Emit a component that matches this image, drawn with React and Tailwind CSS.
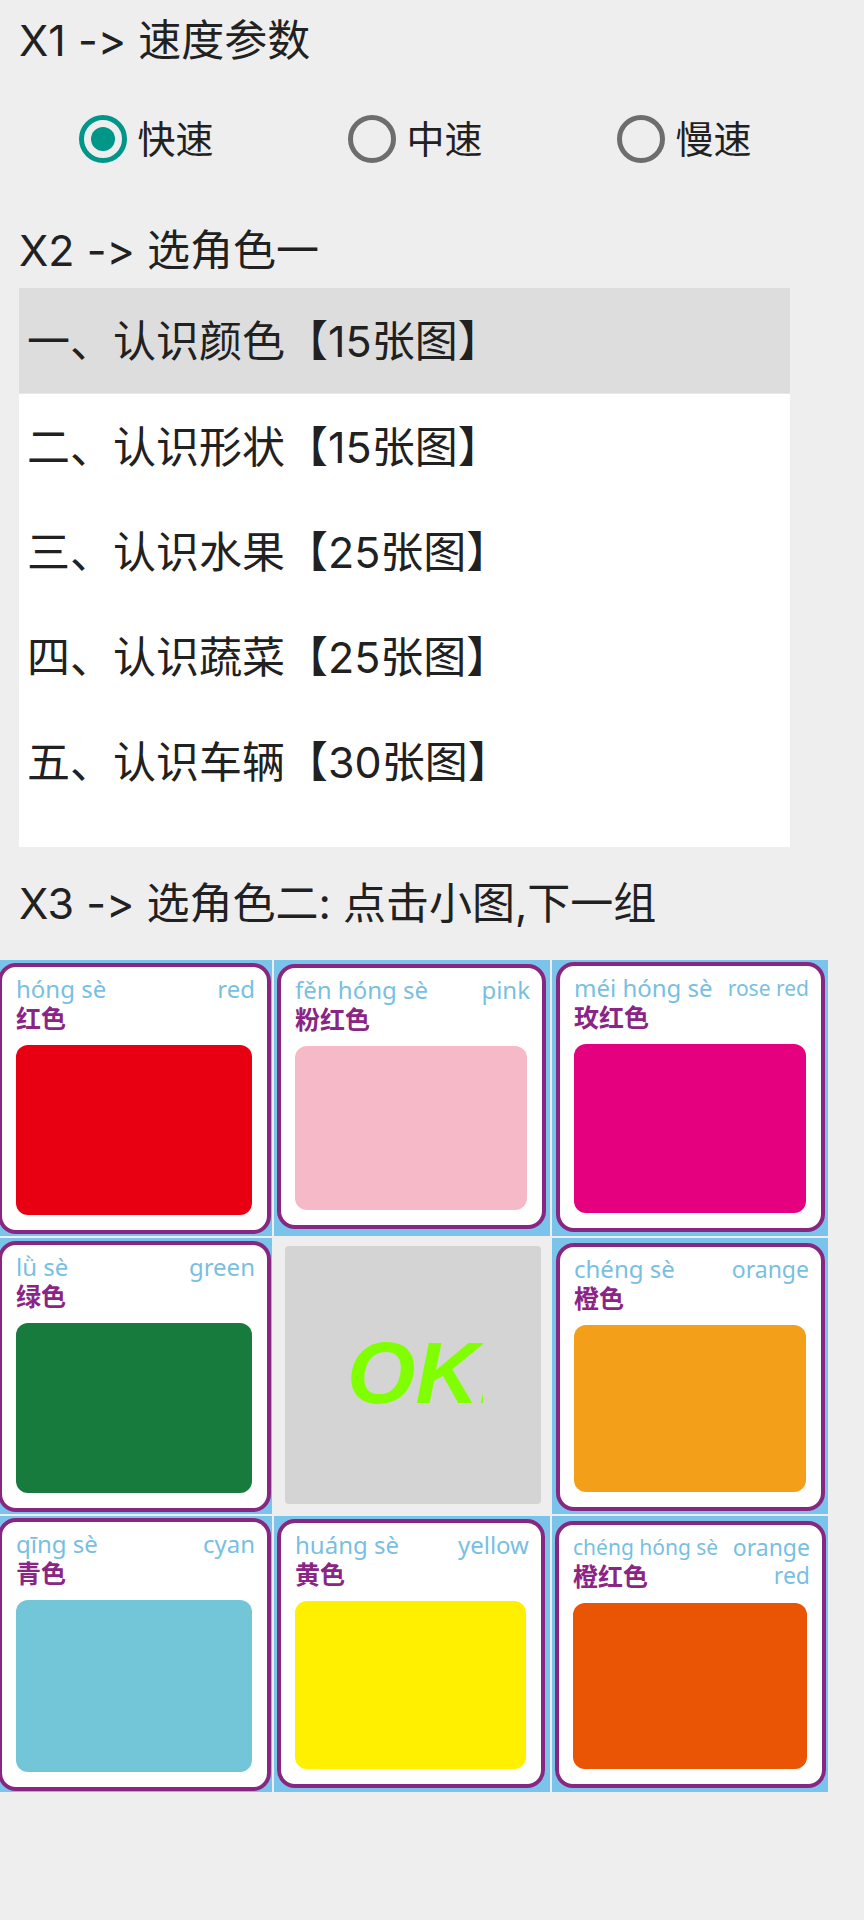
import { useState } from 'react';

const speeds = ['快速', '中速', '慢速'];

const topics = [
  '一、认识颜色【15张图】',
  '二、认识形状【15张图】',
  '三、认识水果【25张图】',
  '四、认识蔬菜【25张图】',
  '五、认识车辆【30张图】',
];

const cards = [
  { pinyin: 'hóng sè', hanzi: '红色', english: 'red', fill: 'bg-[#e80012]', pad: 'pl-[2px] pt-[3px] pr-px pb-[2px]' },
  { pinyin: 'fěn hóng sè', hanzi: '粉红色', english: 'pink', fill: 'bg-[#f6b9c8]', pad: 'pl-[3px] pt-[4px] pr-[4px] pb-[7px]' },
  { pinyin: 'méi hóng sè', hanzi: '玫红色', english: 'rose red', englishSize: 'text-[21px]', fill: 'bg-[#e5007f]', pad: 'pl-[4px] pt-[2px] pr-[3px] pb-[4px]' },
  { pinyin: 'lǜ sè', hanzi: '绿色', english: 'green', fill: 'bg-[#177b3d]', pad: 'pl-[2px] pt-[3px] pr-px pb-[2px]' },
  null,
  { pinyin: 'chéng sè', hanzi: '橙色', english: 'orange', englishSize: 'text-[23px]', fill: 'bg-[#f39f19]', pad: 'pl-[4px] pt-[5px] pr-[3px] pb-[3px]' },
  { pinyin: 'qīng sè', hanzi: '青色', english: 'cyan', fill: 'bg-[#73c6d8]', pad: 'pl-[2px] pt-[2px] pr-px pb-px' },
  { pinyin: 'huáng sè', hanzi: '黄色', english: 'yellow', fill: 'bg-[#fff000]', pad: 'pl-[3px] pt-[3px] pr-[5px] pb-[4px]' },
  { pinyin: 'chéng hóng sè', pinyinSize: 'text-[21px]', hanzi: '橙红色', english: 'orange\nred', englishSize: 'text-[23px]', fill: 'bg-[#ea5405]', pad: 'pl-[3px] pt-[5px] pr-[2px] pb-[4px]' },
];

function Heading({ id, className = '', children }) {
  return (
    <h2 id={id} className={`pl-[19px] text-[43px] leading-[60px] whitespace-nowrap ${className}`}>
      {children}
    </h2>
  );
}

function SpeedOption({ label, checked, onSelect }) {
  return (
    <label className="flex h-12 items-center gap-[10px] text-[38px] leading-[48px] whitespace-nowrap">
      <input
        type="radio"
        name="speed"
        checked={checked}
        onChange={onSelect}
        className="grid size-12 shrink-0 appearance-none place-items-center rounded-full border-[5px] border-[#6d6d6d] before:size-6 before:rounded-full checked:border-[#009688] checked:before:bg-[#009688]"
      />
      {label}
    </label>
  );
}

function ColorCard({ card }) {
  return (
    <button type="button" className={`flex aspect-square bg-[#7ac3ea] ${card.pad}`}>
      <span className="flex h-full w-full flex-col rounded-[18px] border-4 border-[#882782] bg-white pr-[12px] pb-[15px] pl-[14px] text-left">
        <span className="flex h-[78px] shrink-0 justify-between pt-2 font-['Noto_Sans','Noto_Sans_CJK_SC',sans-serif] whitespace-nowrap text-[#78bfe2]">
          <span className="flex flex-col">
            <span className={`leading-[28px] ${card.pinyinSize || 'text-[24px]'}`}>{card.pinyin}</span>
            <span className="text-[25px] leading-[30px] font-bold text-[#8b2585]">{card.hanzi}</span>
          </span>
          <span className={`text-right leading-[28px] whitespace-pre-line ${card.englishSize || 'text-[24px]'}`}>
            {card.english}
          </span>
        </span>
        <span className={`mr-[3px] grow rounded-[12px] ${card.fill}`} />
      </span>
    </button>
  );
}

export default function App() {
  const [speed, setSpeed] = useState(0);
  const [topic, setTopic] = useState(0);

  return (
    <main className="min-h-screen overflow-hidden bg-[#eeeeee] pt-[10px] font-['Inter','Noto_Sans_CJK_SC',sans-serif] text-[#212121] [font-feature-settings:'calt'_0]">
      <Heading id="speed-title">X1 -&gt; 速度参数</Heading>
      <div role="radiogroup" aria-labelledby="speed-title" className="mt-[45px] mr-[45px] ml-3 grid grid-cols-3 justify-items-center">
        {speeds.map((label, i) => (
          <SpeedOption key={label} label={label} checked={speed === i} onSelect={() => setSpeed(i)} />
        ))}
      </div>

      <Heading id="topic-title" className="mt-[57px]">X2 -&gt; 选角色一</Heading>
      <ul aria-labelledby="topic-title" className="mt-2 mr-[74px] ml-[19px] bg-white pb-[33px]">
        {topics.map((name, i) => (
          <li key={name} className="first:border-b first:border-[#e8e8e8]">
            <button
              type="button"
              aria-pressed={topic === i}
              onClick={() => setTopic(i)}
              className={`block h-[105px] w-full pl-2 text-left text-[43px] leading-[60px] whitespace-nowrap ${topic === i ? 'bg-[#dddddd]' : ''}`}
            >
              {name}
            </button>
          </li>
        ))}
      </ul>

      <Heading id="card-title" className="mt-[26px]">X3 -&gt; 选角色二: 点击小图,下一组</Heading>
      <section aria-labelledby="card-title" className="mt-[27px] mr-9 -ml-1 grid grid-cols-3 gap-[2px]">
        {cards.map((card) =>
          card ? (
            <ColorCard key={card.hanzi} card={card} />
          ) : (
            <div key="ok" className="flex aspect-square pt-2 pr-[9px] pb-[10px] pl-[11px]">
              <button type="button" className="flex grow items-center justify-center rounded-[4px] bg-[#d4d4d4] pb-1 pl-1">
                <span className="w-[136px] overflow-hidden text-left font-['Liberation_Sans',sans-serif] text-[88px] leading-[100px] font-bold whitespace-nowrap text-[#80ff00] italic">
                  OK.
                </span>
              </button>
            </div>
          ),
        )}
      </section>
    </main>
  );
}
